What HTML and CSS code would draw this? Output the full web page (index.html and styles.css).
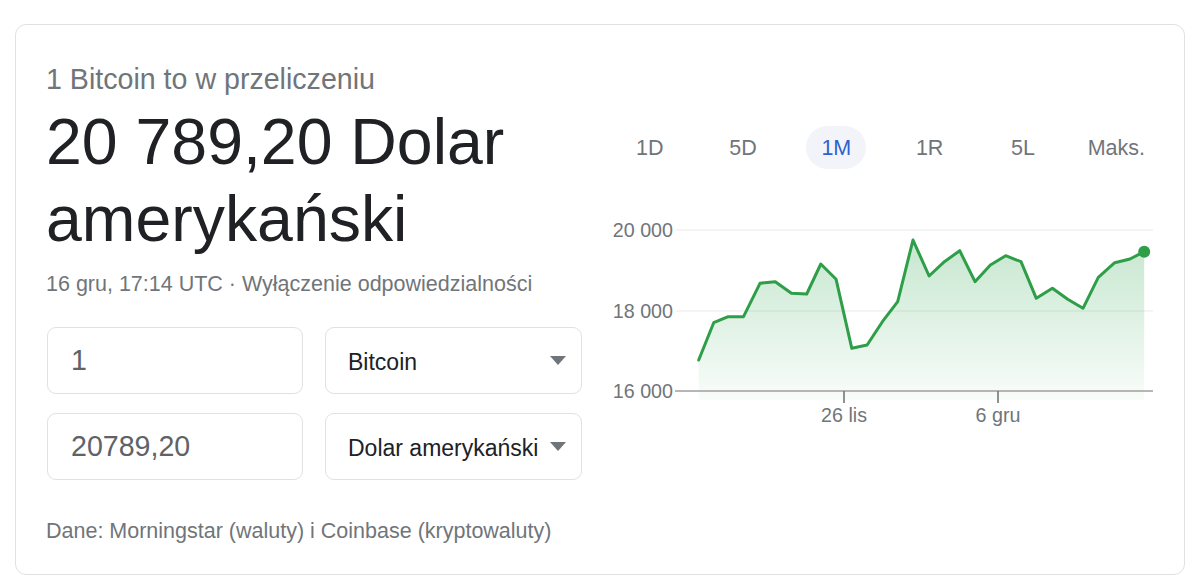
FILE: index.html
```html
<!DOCTYPE html>
<html lang="pl">
<head>
<meta charset="utf-8">
<title>Bitcoin – przelicznik</title>
<link rel="stylesheet" href="styles.css">
</head>
<body>
<div class="card">
  <div class="left">
    <div class="title">1 Bitcoin to w przeliczeniu</div>
    <div class="big">20 789,20 Dolar amerykański</div>
    <div class="date">16 gru, 17:14 UTC · <span>Wyłączenie odpowiedzialności</span></div>
    <div class="form">
      <div class="row">
        <div class="field">1</div>
        <div class="select">Bitcoin<span class="arrow"></span></div>
      </div>
      <div class="row">
        <div class="field">20789,20</div>
        <div class="select">Dolar amerykański<span class="arrow"></span></div>
      </div>
    </div>
    <div class="source">Dane: Morningstar (waluty) i Coinbase (kryptowaluty)</div>
  </div>
  <div class="right">
    <div class="ranges">
      <div class="range">1D</div>
      <div class="range">5D</div>
      <div class="range active"><span>1M</span></div>
      <div class="range">1R</div>
      <div class="range">5L</div>
      <div class="range">Maks.</div>
    </div>
    <svg class="chart" width="560" height="230" viewBox="603 200 560 230">
      <defs>
        <linearGradient id="fill" x1="0" y1="0" x2="0" y2="1">
          <stop offset="0" stop-color="#34a853" stop-opacity="0.28"/>
          <stop offset="1" stop-color="#34a853" stop-opacity="0.03"/>
        </linearGradient>
      </defs>
      <line x1="676" y1="230" x2="1153" y2="230" stroke="#f1f1f1" stroke-width="1.5"/>
      <line x1="676" y1="311" x2="1153" y2="311" stroke="#f1f1f1" stroke-width="1.5"/>
      <path d="M698.7 360 L713.7 322.7 L728.2 316.7 L743.5 316.7 L760 283.3 L775.3 281.7 L791.4 293.3 L806.7 294 L820.8 264 L836.1 279.3 L851.8 348.3 L867.1 345 L882.4 321.7 L897.7 301.7 L913 240 L929.1 276 L944.4 261.7 L959.7 250.7 L975 281.7 L990.4 265 L1005.7 255.7 L1021 261.7 L1036.3 298.3 L1052.4 288.3 L1067.7 299.3 L1083 308.3 L1098.3 277.3 L1114.7 262.7 L1130 259 L1144.2 251.7 L1144.2 400 L698.7 400 Z" fill="url(#fill)"/>
      <line x1="675" y1="391" x2="1153" y2="391" stroke="#9e9e9e" stroke-width="1.6"/>
      <line x1="844" y1="391" x2="844" y2="403" stroke="#757575" stroke-width="1.6"/>
      <line x1="998" y1="391" x2="998" y2="403" stroke="#757575" stroke-width="1.6"/>
      <path d="M698.7 360 L713.7 322.7 L728.2 316.7 L743.5 316.7 L760 283.3 L775.3 281.7 L791.4 293.3 L806.7 294 L820.8 264 L836.1 279.3 L851.8 348.3 L867.1 345 L882.4 321.7 L897.7 301.7 L913 240 L929.1 276 L944.4 261.7 L959.7 250.7 L975 281.7 L990.4 265 L1005.7 255.7 L1021 261.7 L1036.3 298.3 L1052.4 288.3 L1067.7 299.3 L1083 308.3 L1098.3 277.3 L1114.7 262.7 L1130 259 L1144.2 251.7" fill="none" stroke="#2e9e48" stroke-width="3" stroke-linejoin="round" stroke-linecap="round"/>
      <circle cx="1144.2" cy="251.7" r="6" fill="#2e9e48"/>
      <text class="ylab" x="673" y="237">20 000</text>
      <text class="ylab" x="673" y="318">18 000</text>
      <text class="ylab" x="673" y="398">16 000</text>
      <text class="xlab" x="844" y="422">26 lis</text>
      <text class="xlab" x="998" y="422">6 gru</text>
    </svg>
  </div>
</div>
</body>
</html>
```

FILE: styles.css
```css
* {
  box-sizing: border-box;
}

body {
  margin: 0;
  background: #ffffff;
  font-family: "Liberation Sans", Arial, sans-serif;
}

.card {
  margin: 24px 0 0 15px;
  width: 1170px;
  height: 551px;
  border: 1px solid #dfe1e5;
  border-radius: 11px;
  padding: 36px 20px 0 30px;
  display: flex;
  gap: 21px;
}

.left {
  width: 536px;
  flex: none;
}

.title {
  font-size: 28.6px;
  line-height: 36px;
  color: #70757a;
}

.big {
  margin-top: 7px;
  font-size: 64.4px;
  line-height: 77px;
  color: #202124;
}

.date {
  margin-top: 12px;
  font-size: 21.5px;
  line-height: 28px;
  color: #70757a;
}

.form {
  margin-top: 29px;
  display: flex;
  flex-direction: column;
  gap: 19px;
}

.row {
  display: flex;
  gap: 22px;
  padding-left: 1px;
}

.field,
.select {
  height: 67px;
  border: 1px solid #dfe1e5;
  border-radius: 9px;
  display: flex;
  align-items: center;
}

.field {
  width: 256px;
  padding-left: 23px;
  font-size: 28.6px;
  color: #5f6368;
}

.select {
  width: 257px;
  padding: 4px 15px 0 22px;
  font-size: 23px;
  color: #202124;
  justify-content: space-between;
}

.arrow {
  width: 0;
  height: 0;
  margin-top: -4px;
  border-left: 8.6px solid transparent;
  border-right: 8.6px solid transparent;
  border-top: 9px solid #70757a;
}

.source {
  margin-top: 37px;
  font-size: 21.5px;
  line-height: 28px;
  color: #70757a;
}

.right {
  width: 560px;
  flex: none;
  padding-top: 65px;
}

.ranges {
  display: flex;
  height: 43px;
}

.range {
  flex: 1;
  display: flex;
  align-items: center;
  justify-content: center;
  padding-top: 2px;
  font-size: 21.5px;
  color: #70757a;
}

.range.active span {
  width: 60px;
  height: 43px;
  margin-top: -2px;
  padding-top: 2px;
  border-radius: 22px;
  background: #f2f4fa;
  color: #2f5fd0;
  display: flex;
  align-items: center;
  justify-content: center;
}

.chart {
  display: block;
  margin-top: 31px;
}

.ylab {
  font-family: "Liberation Sans", Arial, sans-serif;
  font-size: 19.7px;
  fill: #70757a;
  text-anchor: end;
}

.xlab {
  font-family: "Liberation Sans", Arial, sans-serif;
  font-size: 19.7px;
  fill: #70757a;
  text-anchor: middle;
}
```
